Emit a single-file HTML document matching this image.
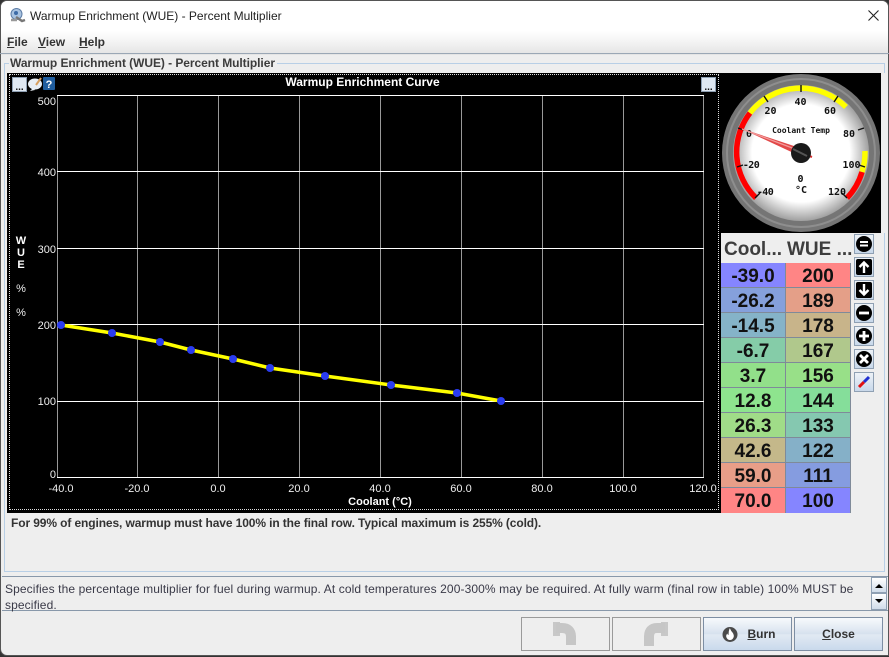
<!DOCTYPE html>
<html><head><meta charset="utf-8"><style>
html,body{margin:0;padding:0;width:889px;height:657px;overflow:hidden;background:#333;}
*{box-sizing:border-box;font-family:"Liberation Sans",sans-serif;}
.a{position:absolute;}
#win{position:absolute;left:0;top:0;width:889px;height:656px;background:#eee;border-radius:7px 7px 0 7px;overflow:hidden;border:1px solid #555;}
#top{position:absolute;left:0;top:0;width:889px;height:54px;background:linear-gradient(#fff 0,#fff 30px,#f2f2f2 42px,#e4e4e4 53px);}
.t{position:absolute;white-space:nowrap;}
.btn{position:absolute;top:617px;width:89px;height:34px;border:1px solid #8a97a8;text-align:center;font-weight:bold;font-size:12px;color:#333;line-height:32px;}
.btn.on{background:linear-gradient(#f6f9fc 0,#eef3f8 15%,#d6e1ee 50%,#e2eaf3 52%,#c9d9ec 100%);border-color:#7d8ea3;}
.btn.off{background:#eee;border-color:#9a9a9a;}
.side{position:absolute;left:854px;width:20px;height:20px;background:linear-gradient(#edf2f7,#c8d8ea);border:1px solid #8fa0b3;}
.cell{position:absolute;width:65px;height:25px;font-size:19px;font-weight:bold;line-height:28px;text-align:center;color:#111;border-bottom:1px solid #7f8a99;border-right:1px solid #7f8a99;overflow:hidden;}
u{text-decoration:underline;}
.g text{font-family:"DejaVu Sans Mono","Liberation Mono",monospace;font-weight:bold;}
</style></head><body>
<div id="win"><div id="top"></div></div>
<div class="a" style="left:0;top:0;width:889px;height:657px;">
<!-- Title icon -->
<svg class="a" style="left:9px;top:7px" width="17" height="17"><circle cx="7.5" cy="7" r="5.5" fill="#a9c3e0" stroke="#5d7da6"/><circle cx="7" cy="6" r="2" fill="#3d6ba6"/><path d="M7 10l6 4 3-1" stroke="#777" stroke-width="2.5" fill="none"/><path d="M2 13h6" stroke="#999" stroke-width="2.5"/></svg>
<div class="t" style="left:30px;top:9px;font-size:12px;color:#222;">Warmup Enrichment (WUE) - Percent Multiplier</div>
<svg class="a" style="left:867px;top:9px" width="13" height="13"><path d="M1.5 1.5L11.5 11.5M11.5 1.5L1.5 11.5" stroke="#222" stroke-width="1.1"/></svg>
<div class="t" style="left:7px;top:35px;font-size:12px;font-weight:bold;color:#333;"><u>F</u>ile</div>
<div class="t" style="left:38px;top:35px;font-size:12px;font-weight:bold;color:#333;"><u>V</u>iew</div>
<div class="t" style="left:79px;top:35px;font-size:12px;font-weight:bold;color:#333;"><u>H</u>elp</div>
<div class="a" style="left:0;top:53px;width:889px;height:1px;background:#9aa7b5;"></div>
<!-- Titled panel -->
<div class="a" style="left:4px;top:63px;width:881px;height:509px;border:1px solid #b8cfe6;"></div>
<div class="t" style="left:9px;top:56px;font-size:12px;font-weight:bold;color:#3c3c3c;background:#eee;padding:0 2px 0 1px;letter-spacing:-.06px;">Warmup Enrichment (WUE) - Percent Multiplier</div>
<!-- Chart -->
<div class="a" style="left:7px;top:73px;width:714px;height:440px;background:#000;"></div>
<div class="a" style="left:9px;top:74px;width:710px;height:436px;border:1px dotted #ddd;"></div>
<svg class="a" style="left:0;top:0" width="889" height="657">
<g stroke="#999" stroke-width="1"><path d="M57.5 95V478M137.5 95V478M218.5 95V478M299.5 95V478M380.5 95V478M461.5 95V478M542.5 95V478M623.5 95V478M703.5 95V478"/></g>
<g stroke="#fff" stroke-width="1"><path d="M57 95.5H704M57 171.5H704M57 248.5H704M57 324.5H704M57 401.5H704M57 477.5H704"/></g>
<polyline points="61,325 112,333 160,342 191,350 233,359 270,368 325,376 391,385 457,393 501,401" fill="none" stroke="#ff0" stroke-width="3.5"/>
<g fill="#2a3cf0"><circle cx="61" cy="325" r="4"/><circle cx="112" cy="333" r="4"/><circle cx="160" cy="342" r="4"/><circle cx="191" cy="350" r="4"/><circle cx="233" cy="359" r="4"/><circle cx="270" cy="368" r="4"/><circle cx="325" cy="376" r="4"/><circle cx="391" cy="385" r="4"/><circle cx="457" cy="393" r="4"/><circle cx="501" cy="401" r="4"/></g>
<g fill="#eee" font-size="11" text-anchor="end"><text x="56" y="105">500</text><text x="56" y="176">400</text><text x="56" y="253">300</text><text x="56" y="329">200</text><text x="56" y="405">100</text><text x="56" y="478">0</text></g>
<g fill="#eee" font-size="11" text-anchor="middle"><text x="61" y="492">-40.0</text><text x="137" y="492">-20.0</text><text x="218" y="492">0.0</text><text x="299" y="492">20.0</text><text x="380" y="492">40.0</text><text x="461" y="492">60.0</text><text x="542" y="492">80.0</text><text x="623" y="492">100.0</text><text x="703" y="492">120.0</text></g>
<text x="380" y="505" fill="#fff" font-size="11" font-weight="bold" text-anchor="middle">Coolant (°C)</text>
<text x="362.5" y="86" fill="#fff" font-size="12" font-weight="bold" text-anchor="middle">Warmup Enrichment Curve</text>
<g fill="#fff" font-size="11" font-weight="bold" text-anchor="middle"><text x="21" y="244">W</text><text x="21" y="256">U</text><text x="21" y="268">E</text></g>
<g fill="#eee" font-size="11" text-anchor="middle"><text x="21" y="292">%</text><text x="21" y="316">%</text></g>
<!-- small toolbar -->
<rect x="12.5" y="77.5" width="14" height="14" fill="#dfe8f2" stroke="#8fa0b3"/><text x="19.5" y="90" font-size="10" font-weight="bold" text-anchor="middle" fill="#111">...</text>
<ellipse cx="35" cy="84" rx="7" ry="5.5" fill="#e8eef4"/><path d="M33 88l-3 3 5-1z" fill="#e8eef4"/><path d="M36 85l5-7" stroke="#d8a060" stroke-width="2"/>
<rect x="43" y="77" width="12" height="13" fill="#1f5d9e" rx="1"/><text x="49" y="88" font-size="11" font-weight="bold" text-anchor="middle" fill="#fff">?</text>
<rect x="701.5" y="77.5" width="14" height="14" fill="#dfe8f2" stroke="#8fa0b3"/><text x="708.5" y="90" font-size="10" font-weight="bold" text-anchor="middle" fill="#111">...</text>
<!-- gauge bg -->
<rect x="721" y="73" width="167" height="160" fill="#eee"/>
<rect x="721" y="73" width="160" height="160" fill="#000"/>
<defs><radialGradient id="gf" cx=".5" cy=".5" r=".5"><stop offset=".72" stop-color="#fff"/><stop offset="1" stop-color="#a0a0a0"/></radialGradient></defs>
<circle cx="801" cy="153" r="79" fill="#757575"/>
<circle cx="801" cy="153" r="74" fill="none" stroke="#8e8e8e" stroke-width="2"/>
<circle cx="801" cy="153" r="68" fill="url(#gf)"/>
<!-- arcs -->
<path d="M756 198A64 64 0 0 1 750 113" fill="none" stroke="#f00" stroke-width="5.5"/>
<path d="M750 113A64 64 0 0 1 846 107" fill="none" stroke="#ff0" stroke-width="5.5"/>
<path d="M865 151A64 64 0 0 1 862 172" fill="none" stroke="#ff0" stroke-width="5.5"/>
<path d="M862 172A64 64 0 0 1 847 198" fill="none" stroke="#f00" stroke-width="5.5"/>
<g stroke="#111" stroke-width="1.4"><path d="M801 85v7M764 96l4 6M838 96l-4 6M738 128l6 2M864 128l-6 2M737 167l6-2M865 167l-6-2M755 198l5-5M847 198l-5-5"/></g>
<g class="g" font-size="10" fill="#111" text-anchor="middle">
<text x="800.5" y="105">40</text><text x="770.5" y="114">20</text><text x="830" y="114">60</text><text x="749" y="137">0</text><text x="849" y="137">80</text><text x="751" y="168" letter-spacing="-.6">-20</text><text x="851.5" y="168">100</text><text x="765" y="195" letter-spacing="-.6">-40</text><text x="837" y="195">120</text><text x="800.5" y="182">0</text><text x="801" y="193">°C</text>
<text x="801" y="133" font-size="8">Coolant Temp</text></g>
<path d="M812 157L801 153" stroke="#e03030" stroke-width="2"/>
<polygon points="740,128 803,149 800,156" fill="#e24848"/>
<path d="M742 129L795 149" stroke="#f29a9a" stroke-width="1.3"/>
<circle cx="801" cy="153" r="10" fill="#1a1a1a"/>
<path d="M793 149l14 7" stroke="#555" stroke-width="2"/>
</svg>
<!-- table -->
<div class="a" style="left:721px;top:233px;width:130px;height:30px;background:#eee;font-size:19px;font-weight:bold;color:#3d3d3d;line-height:34px;white-space:nowrap;">
<span style="position:absolute;left:3px;">Cool...</span><span style="position:absolute;left:66px;">WUE ...</span></div>
<div class="cell" style="left:721px;top:263px;background:#8585ff;">-39.0</div><div class="cell" style="left:786px;top:263px;background:#ff8585;">200</div>
<div class="cell" style="left:721px;top:288px;background:#85a0dc;">-26.2</div><div class="cell" style="left:786px;top:288px;background:#e49f88;">189</div>
<div class="cell" style="left:721px;top:313px;background:#85b3c8;">-14.5</div><div class="cell" style="left:786px;top:313px;background:#c8b48a;">178</div>
<div class="cell" style="left:721px;top:338px;background:#85cca8;">-6.7</div><div class="cell" style="left:786px;top:338px;background:#b0c88c;">167</div>
<div class="cell" style="left:721px;top:363px;background:#92e08a;">3.7</div><div class="cell" style="left:786px;top:363px;background:#98e088;">156</div>
<div class="cell" style="left:721px;top:388px;background:#8ee48e;">12.8</div><div class="cell" style="left:786px;top:388px;background:#85de9a;">144</div>
<div class="cell" style="left:721px;top:413px;background:#a0dc88;">26.3</div><div class="cell" style="left:786px;top:413px;background:#85c8b0;">133</div>
<div class="cell" style="left:721px;top:438px;background:#c4b88a;">42.6</div><div class="cell" style="left:786px;top:438px;background:#85b0c8;">122</div>
<div class="cell" style="left:721px;top:463px;background:#e89e88;">59.0</div><div class="cell" style="left:786px;top:463px;background:#859ce0;">111</div>
<div class="cell" style="left:721px;top:488px;background:#ff8585;border-bottom:none;">70.0</div><div class="cell" style="left:786px;top:488px;background:#8585ff;border-bottom:none;">100</div>
<!-- side buttons -->
<div class="side" style="top:234px;"><svg width="18" height="18" style="display:block"><circle cx="9" cy="9" r="8" fill="#000"/><path d="M5 7h8M5 10.500h8" stroke="#fff" stroke-width="2"/></svg></div>
<div class="side" style="top:257px;"><svg width="18" height="18" style="display:block"><rect x="1" y="1" width="16" height="16" rx="2" fill="#000"/><path d="M9 15V5M4.500 9L9 4.500l4.500 4.500" stroke="#fff" stroke-width="2.4" fill="none"/></svg></div>
<div class="side" style="top:280px;"><svg width="18" height="18" style="display:block"><rect x="1" y="1" width="16" height="16" rx="2" fill="#000"/><path d="M9 3v10M4.500 9l4.500 4.500L13.500 9" stroke="#fff" stroke-width="2.4" fill="none"/></svg></div>
<div class="side" style="top:303px;"><svg width="18" height="18" style="display:block"><circle cx="9" cy="9" r="8" fill="#000"/><path d="M4 9h10" stroke="#fff" stroke-width="2.8"/></svg></div>
<div class="side" style="top:326px;"><svg width="18" height="18" style="display:block"><circle cx="9" cy="9" r="8" fill="#000"/><path d="M4 9h10M9 4v10" stroke="#fff" stroke-width="2.8"/></svg></div>
<div class="side" style="top:349px;"><svg width="18" height="18" style="display:block"><circle cx="9" cy="9" r="8" fill="#000"/><path d="M5 5l8 8M13 5l-8 8" stroke="#fff" stroke-width="2.8"/></svg></div>
<div class="side" style="top:372px;"><svg width="18" height="18" style="display:block"><path d="M4 14L9 9" stroke="#e01010" stroke-width="3"/><path d="M9 9l5-5" stroke="#2030d0" stroke-width="3"/></svg></div>
<div class="t" style="left:11px;top:516px;font-size:12px;font-weight:bold;color:#333;letter-spacing:-.11px;">For 99% of engines, warmup must have 100% in the final row. Typical maximum is 255% (cold).</div>
<!-- help -->
<div class="a" style="left:2px;top:576px;width:886px;height:1px;background:#8898aa;"></div>
<div class="a" style="left:2px;top:610px;width:886px;height:1px;background:#8898aa;"></div>
<div class="t" style="left:5px;top:582px;font-size:12px;color:#3a3a48;letter-spacing:.11px;">Specifies the percentage multiplier for fuel during warmup. At cold temperatures 200-300% may be required. At fully warm (final row in table) 100% MUST be</div>
<div class="t" style="left:5px;top:598px;font-size:12px;color:#3a3a48;letter-spacing:.11px;">specified.</div>
<div class="a" style="left:871px;top:577px;width:16px;height:16px;background:linear-gradient(#fff,#d0dcea);border:1px solid #8fa0b3;"></div>
<div class="a" style="left:871px;top:593px;width:16px;height:17px;background:linear-gradient(#fff,#d0dcea);border:1px solid #8fa0b3;"></div>
<svg class="a" style="left:873px;top:581px" width="12" height="26"><path d="M2 7l4-4 4 4zM2 18h8l-4 4z" fill="#000"/></svg>
<!-- buttons -->
<div class="btn off" style="left:521px;"></div>
<div class="btn off" style="left:612px;"></div>
<svg class="a" style="left:0;top:0;" width="889" height="657">
<rect x="553" y="622" width="7" height="14" fill="#c8c8c8"/>
<path d="M556 628H562Q571 628 571 637V645" fill="none" stroke="#c6c6c6" stroke-width="10"/>
<rect x="661" y="622" width="7" height="14" fill="#c8c8c8"/>
<path d="M665 628H657Q649 628 649 637V646" fill="none" stroke="#c6c6c6" stroke-width="10"/>
</svg>
<div class="btn on" style="left:703px;padding-left:28px;"><u>B</u>urn</div>
<svg class="a" style="left:722px;top:626px" width="17" height="17"><circle cx="8" cy="8.500" r="7.5" fill="#4a4a4a"/><path d="M8 2.500q1 2.500 2.500 4 2 2.500 1 5-1 2.500-3.500 2.500-2.500 0-3.500-2.500-1-2.500 1-4 0 1.500 1 1.500 0-3.500 1-6.500z" fill="#fff"/></svg>
<div class="btn on" style="left:794px;"><u>C</u>lose</div>
</div>
</body></html>
